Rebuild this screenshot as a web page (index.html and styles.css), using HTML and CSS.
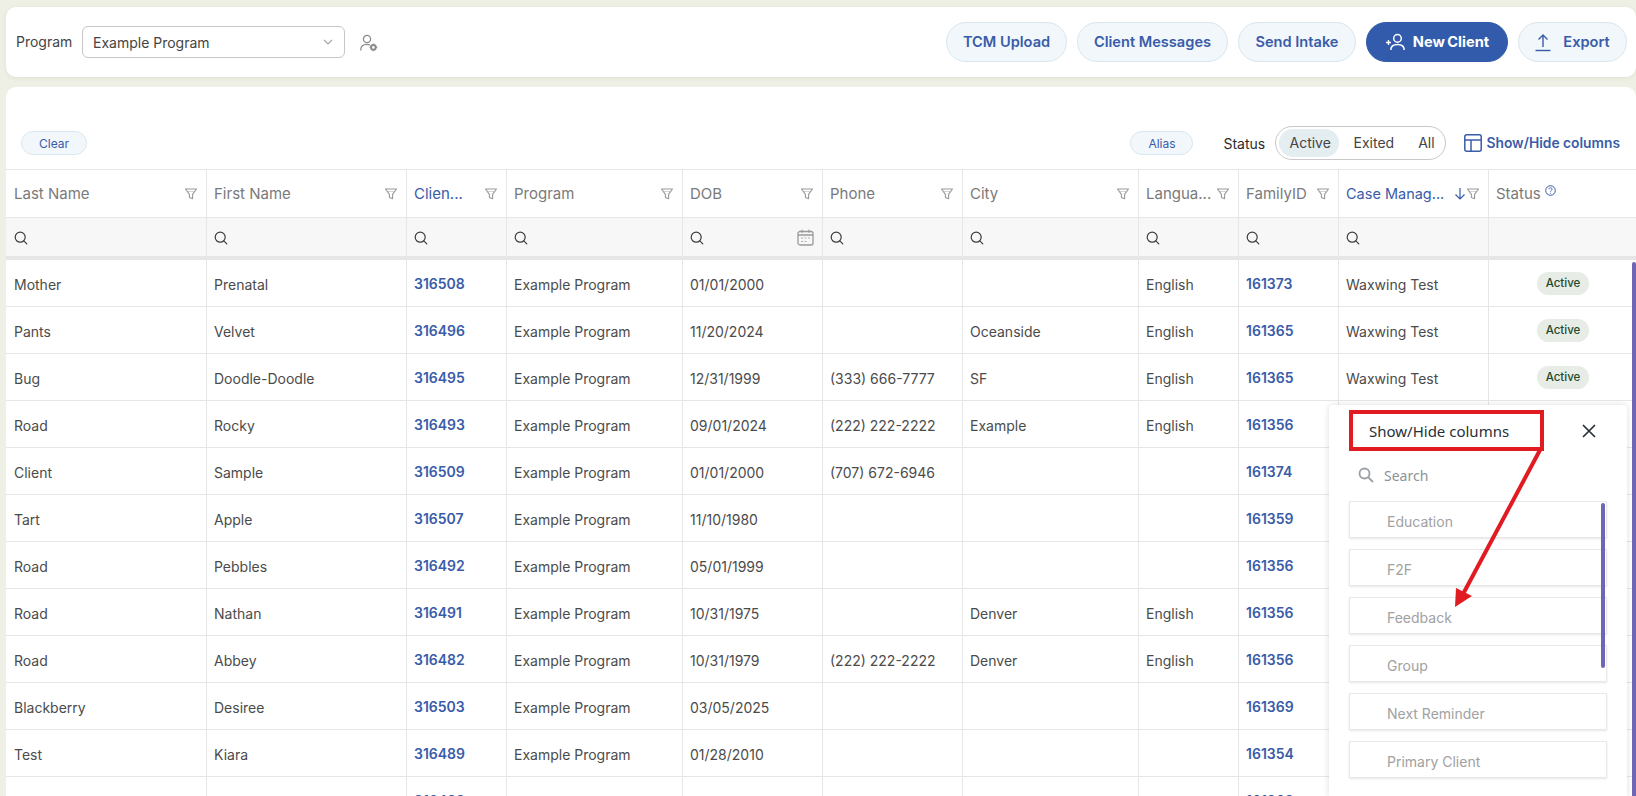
FILE: index.html
```html
<!DOCTYPE html>
<html lang="en">
<head>
<meta charset="utf-8">
<title>Clients</title>
<link rel="stylesheet" href="styles.css">
</head>
<body>
<svg class="defs" width="0" height="0" aria-hidden="true">
  <symbol id="i-filter" viewBox="0 0 14 14"><path d="M1.5 2h11L8.6 7.4v4.4L5.4 10.4v-3z" fill="none" stroke="currentColor" stroke-width="1.1" stroke-linejoin="round"/><path d="M3.4 4.4h7.2" stroke="currentColor" stroke-width=".8" opacity=".6"/></symbol>
  <symbol id="i-search" viewBox="0 0 14 14"><circle cx="6.2" cy="6.2" r="5" fill="none" stroke="currentColor" stroke-width="1.2"/><path d="M9.8 9.8l3 3" stroke="currentColor" stroke-width="1.2" stroke-linecap="round"/></symbol>
</svg>

<header class="topbar">
  <span class="label">Program</span>
  <div class="select">
    <span>Example Program</span>
    <svg class="chev" width="10" height="6" viewBox="0 0 10 6"><path d="M1 1l4 4 4-4" fill="none" stroke="#a5a5a5" stroke-width="1.1"/></svg>
  </div>
  <svg class="usergear" width="20" height="20" viewBox="0 0 20 20"><circle cx="8" cy="6" r="3.6" fill="none" stroke="#8c8c8c" stroke-width="1.3"/><path d="M1.8 17c0-3.6 2.6-5.6 6-5.6 1 0 1.8.1 2.6.5" fill="none" stroke="#8c8c8c" stroke-width="1.3" stroke-linecap="round"/><circle cx="14.4" cy="14.4" r="2.3" fill="none" stroke="#8c8c8c" stroke-width="2"/><path d="M14.4 10.6v1.4M14.4 16.8v1.4M10.6 14.4H12M16.8 14.4h1.4" stroke="#8c8c8c" stroke-width="1.2"/></svg>
  <div class="actions">
    <button class="btn w-tcm">TCM Upload</button>
    <button class="btn w-msg">Client Messages</button>
    <button class="btn w-intake">Send Intake</button>
    <button class="btn primary w-new">
      <svg width="22" height="20" viewBox="0 0 22 20"><circle cx="12.5" cy="6.4" r="3.8" fill="none" stroke="#fff" stroke-width="1.5"/><path d="M5.8 18c0-3.6 2.8-5.6 6.7-5.6s6.7 2 6.7 5.6" fill="none" stroke="#fff" stroke-width="1.5"/><path d="M1 10.5h5M3.5 8v5" stroke="#fff" stroke-width="1.4"/></svg>
      New Client
    </button>
    <button class="btn w-export">
      <svg width="16" height="20" viewBox="0 0 16 20"><path d="M8 15V3M3.5 7.5L8 3l4.5 4.5" fill="none" stroke="#3a5ca8" stroke-width="1.4"/><path d="M0.5 18.5h15" stroke="#3a5ca8" stroke-width="1.4"/></svg>
      Export
    </button>
  </div>
</header>

<main class="card">
  <div class="toolbar">
    <button class="chip chip-clear">Clear</button>
    <div class="tools">
      <button class="chip chip-alias">Alias</button>
      <span class="status-label">Status</span>
      <div class="toggle">
        <span class="opt on">Active</span>
        <span class="opt">Exited</span>
        <span class="opt">All</span>
      </div>
      <a class="columns-link">
        <svg width="18" height="18" viewBox="0 0 18 18"><rect x=".8" y=".8" width="16.4" height="16.4" rx="2" fill="none" stroke="#3a5ca8" stroke-width="1.5"/><path d="M.8 6h16.4M7 6v11" stroke="#3a5ca8" stroke-width="1.5"/></svg>
        Show/Hide columns
      </a>
    </div>
  </div>

  <table class="grid">
    <colgroup>
      <col class="c201"><col class="c200"><col class="c100"><col class="c176"><col class="c140"><col class="c140"><col class="c176"><col class="c100"><col class="c100"><col class="c150"><col>
    </colgroup>
    <thead>
      <tr class="head">
        <th><div class="th"><span>Last Name</span><svg class="filter"><use href="#i-filter"/></svg></div></th>
        <th><div class="th"><span>First Name</span><svg class="filter"><use href="#i-filter"/></svg></div></th>
        <th><div class="th"><span class="sorted">Clien...</span><svg class="filter"><use href="#i-filter"/></svg></div></th>
        <th><div class="th"><span>Program</span><svg class="filter"><use href="#i-filter"/></svg></div></th>
        <th><div class="th"><span>DOB</span><svg class="filter"><use href="#i-filter"/></svg></div></th>
        <th><div class="th"><span>Phone</span><svg class="filter"><use href="#i-filter"/></svg></div></th>
        <th><div class="th"><span>City</span><svg class="filter"><use href="#i-filter"/></svg></div></th>
        <th><div class="th"><span>Langua...</span><svg class="filter"><use href="#i-filter"/></svg></div></th>
        <th><div class="th"><span>FamilyID</span><svg class="filter"><use href="#i-filter"/></svg></div></th>
        <th><div class="th"><span class="sorted tight">Case Manag...</span><span class="sort-end"><svg class="arrow" width="12" height="13" viewBox="0 0 12 13"><path d="M6 1v11M1.5 7.5L6 12l4.5-4.5" fill="none" stroke="#3a5ca8" stroke-width="1.2"/></svg><svg class="filter"><use href="#i-filter"/></svg></span></div></th>
        <th><div class="th th-start"><span>Status</span><svg class="help" width="11" height="11" viewBox="0 0 11 11"><circle cx="5.5" cy="5.5" r="4.8" fill="none" stroke="#3a5ca8"/><path d="M3.9 4.3c0-2 3.2-2 3.2-.1 0 1.200-1.600 1.200-1.600 2.500M5.500 7.800v.9" fill="none" stroke="#3a5ca8" stroke-width=".9"/></svg></div></th>
      </tr>
      <tr class="searchrow">
        <th><svg class="mag"><use href="#i-search"/></svg></th>
        <th><svg class="mag"><use href="#i-search"/></svg></th>
        <th><svg class="mag"><use href="#i-search"/></svg></th>
        <th><svg class="mag"><use href="#i-search"/></svg></th>
        <th><div class="th"><svg class="mag"><use href="#i-search"/></svg><svg class="cal" width="17" height="17" viewBox="0 0 17 17"><rect x="1" y="2.500" width="15" height="13.500" rx="2" fill="none" stroke="#9a9a9a" stroke-width="1.300"/><path d="M1 6h15" stroke="#9a9a9a" stroke-width="1.300"/><path d="M5 .8v3M12 .8v3" stroke="#9a9a9a" stroke-width="1.300"/><path d="M4 9h2M7.500 9h2M11 9h2M4 12.500h2M7.500 12.500h2" stroke="#b0b0b0" stroke-width="1.200"/></svg></div></th>
        <th><svg class="mag"><use href="#i-search"/></svg></th>
        <th><svg class="mag"><use href="#i-search"/></svg></th>
        <th><svg class="mag"><use href="#i-search"/></svg></th>
        <th><svg class="mag"><use href="#i-search"/></svg></th>
        <th><svg class="mag"><use href="#i-search"/></svg></th>
        <th></th>
      </tr>
    </thead>
    <tbody>
      <tr><td>Mother</td><td>Prenatal</td><td class="id">316508</td><td>Example Program</td><td>01/01/2000</td><td></td><td></td><td>English</td><td class="id">161373</td><td>Waxwing Test</td><td class="st"><span class="badge">Active</span></td></tr>
      <tr><td>Pants</td><td>Velvet</td><td class="id">316496</td><td>Example Program</td><td>11/20/2024</td><td></td><td>Oceanside</td><td>English</td><td class="id">161365</td><td>Waxwing Test</td><td class="st"><span class="badge">Active</span></td></tr>
      <tr><td>Bug</td><td>Doodle-Doodle</td><td class="id">316495</td><td>Example Program</td><td>12/31/1999</td><td>(333) 666-7777</td><td>SF</td><td>English</td><td class="id">161365</td><td>Waxwing Test</td><td class="st"><span class="badge">Active</span></td></tr>
      <tr><td>Road</td><td>Rocky</td><td class="id">316493</td><td>Example Program</td><td>09/01/2024</td><td>(222) 222-2222</td><td>Example</td><td>English</td><td class="id">161356</td><td></td><td></td></tr>
      <tr><td>Client</td><td>Sample</td><td class="id">316509</td><td>Example Program</td><td>01/01/2000</td><td>(707) 672-6946</td><td></td><td></td><td class="id">161374</td><td></td><td></td></tr>
      <tr><td>Tart</td><td>Apple</td><td class="id">316507</td><td>Example Program</td><td>11/10/1980</td><td></td><td></td><td></td><td class="id">161359</td><td></td><td></td></tr>
      <tr><td>Road</td><td>Pebbles</td><td class="id">316492</td><td>Example Program</td><td>05/01/1999</td><td></td><td></td><td></td><td class="id">161356</td><td></td><td></td></tr>
      <tr><td>Road</td><td>Nathan</td><td class="id">316491</td><td>Example Program</td><td>10/31/1975</td><td></td><td>Denver</td><td>English</td><td class="id">161356</td><td></td><td></td></tr>
      <tr><td>Road</td><td>Abbey</td><td class="id">316482</td><td>Example Program</td><td>10/31/1979</td><td>(222) 222-2222</td><td>Denver</td><td>English</td><td class="id">161356</td><td></td><td></td></tr>
      <tr><td>Blackberry</td><td>Desiree</td><td class="id">316503</td><td>Example Program</td><td>03/05/2025</td><td></td><td></td><td></td><td class="id">161369</td><td></td><td></td></tr>
      <tr><td>Test</td><td>Kiara</td><td class="id">316489</td><td>Example Program</td><td>01/28/2010</td><td></td><td></td><td></td><td class="id">161354</td><td></td><td></td></tr>
      <tr><td>Test</td><td>Kid</td><td class="id">316488</td><td>Example Program</td><td>01/01/2015</td><td></td><td></td><td>English</td><td class="id">161368</td><td></td><td></td></tr>
    </tbody>
  </table>
</main>

<div class="vbar"></div>

<aside class="panel">
  <div class="panel-head">
    <span class="panel-title">Show/Hide columns</span>
    <svg class="close" width="14" height="14" viewBox="0 0 14 14"><path d="M1 1l12 12M13 1L1 13" stroke="#27303a" stroke-width="1.700"/></svg>
  </div>
  <div class="panel-search">
    <svg width="16" height="16" viewBox="0 0 16 16"><circle cx="6.500" cy="6.500" r="5" fill="none" stroke="#9aa0a6" stroke-width="1.800"/><path d="M10.300 10.300l4.700 4.700" stroke="#9aa0a6" stroke-width="1.800"/></svg>
    <span>Search</span>
  </div>
  <div class="panel-list">
    <div class="item">Education</div>
    <div class="item">F2F</div>
    <div class="item">Feedback</div>
    <div class="item">Group</div>
    <div class="item">Next Reminder</div>
    <div class="item">Primary Client</div>
    <div class="thumb"></div>
  </div>
</aside>

<svg class="annot" width="1636" height="796" viewBox="0 0 1636 796" aria-hidden="true">
  <rect x="1351" y="412" width="191" height="37" fill="none" stroke="#e01b22" stroke-width="4"/>
  <path d="M1540 450L1462 596" stroke="#e01b22" stroke-width="4"/>
  <polygon points="1456,588 1472,596 1455,607" fill="#e01b22"/>
</svg>
</body>
</html>
```

FILE: styles.css
```css
* { box-sizing: border-box; }
html, body { margin: 0; height: 796px; overflow: hidden; }
body {
  position: relative;
  padding: 7px 0 0 6px;
  background: #eef0e5;
  font-family: Inter, "Liberation Sans", sans-serif;
  font-size: 14px;
  color: #4b4b4b;
}
.defs { position: absolute; }

.topbar {
  display: flex;
  align-items: center;
  height: 70px;
  padding: 0 9px 0 10px;
  background: #fff;
  border-radius: 10px;
  box-shadow: 0 1px 4px rgba(120, 120, 90, .12);
}
.label { color: #444; width: 66px; margin-bottom: 2px; }
.select {
  display: flex;
  align-items: center;
  justify-content: space-between;
  width: 263px;
  height: 32px;
  padding: 0 11px 0 10px;
  border: 1px solid #c6c6c6;
  border-radius: 6px;
  color: #444;
}
.usergear { margin-left: 14px; margin-top: 2px; }
.actions { display: flex; gap: 10px; margin-left: auto; }
.btn {
  display: flex;
  align-items: center;
  justify-content: center;
  gap: 8px;
  height: 40px;
  padding: 0;
  border: 1px solid #d9e6ed;
  border-radius: 20px;
  background: #f1f7fb;
  color: #3a5ca8;
  font: 600 14.6px Inter, "Liberation Sans", sans-serif;
}
.btn.primary { background: #325cab; border-color: #325cab; color: #fff; font-weight: 700; gap: 6px; word-spacing: -1px; }
.w-tcm { width: 121px; }
.w-msg { width: 151px; }
.w-intake { width: 118px; }
.w-new { width: 142px; }
.w-export { width: 109px; gap: 12px; }

.card {
  height: 709px;
  margin-top: 10px;
  background: #fff;
  border-radius: 10px 10px 0 0;
  overflow: hidden;
}
.toolbar {
  display: flex;
  align-items: center;
  height: 82px;
  padding: 39px 16px 9px 15px;
}
.chip {
  height: 24px;
  padding: 0;
  border: 1px solid #dbe7ee;
  border-radius: 12px;
  background: #f1f7fb;
  color: #3a5ca8;
  font: 400 12px Inter, "Liberation Sans", sans-serif;
}
.chip-clear { width: 66px; }
.chip-alias { width: 63px; margin-right: 30px; }
.tools { display: flex; align-items: center; margin-left: auto; }
.status-label { width: 52px; color: #2b2b2b; }
.toggle {
  display: flex;
  align-items: center;
  width: 171px;
  height: 34px;
  padding: 0 3px;
  border: 1px solid #c9c9c9;
  border-radius: 17px;
  color: #444;
}
.opt { padding: 0 10px; line-height: 28px; border-radius: 14px; }
.opt.on { width: 60px; background: #e4eef1; margin-right: 4px; }
.opt:last-child { margin-left: 4px; }
.columns-link {
  display: flex;
  align-items: center;
  gap: 4px;
  margin-left: 18px;
  color: #3a5ca8;
  font-weight: 600;
  font-size: 13.8px;
  white-space: nowrap;
}

.grid {
  width: 100%;
  table-layout: fixed;
  border-collapse: separate;
  border-spacing: 0;
}
.c201 { width: 201px; }
.c200 { width: 200px; }
.c100 { width: 100px; }
.c176 { width: 176px; }
.c140 { width: 140px; }
.c150 { width: 150px; }
.grid th, .grid td {
  padding: 0 8px 0 7px;
  border-right: 1px solid #e6e6e6;
  border-bottom: 1px solid #e6e6e6;
  text-align: left;
  font-weight: 400;
  white-space: nowrap;
  overflow: hidden;
}
.grid th:first-child, .grid td:first-child { padding-left: 8px; }
.grid th:last-child, .grid td:last-child { border-right: 0; }
.head th {
  height: 49px;
  border-top: 1px solid #e6e6e6;
  color: #7a7a7a;
  font-size: 15px;
}
.searchrow th {
  height: 42px;
  background: #f7f7f7;
  border-bottom: 4px solid #e6e6e6;
  color: #3c3c3c;
}
.grid td { height: 47px; padding-top: 2px; color: #4b4b4b; }
.th { display: flex; align-items: center; justify-content: space-between; }
.th-start { justify-content: flex-start; gap: 4px; }
.sorted { color: #3a5ca8; }
.tight { font-size: 14.5px; }
.sort-end { display: flex; align-items: center; }
.filter { width: 14px; height: 14px; color: #9a9a9a; flex: none; }
.help { margin-bottom: 6px; }
.mag { display: block; width: 14px; height: 14px; color: #3c3c3c; margin-top: 1px; }
.grid td.id { color: #3a5ca8; font-weight: 600; padding-bottom: 2px; }
.grid td.st { padding-left: 48px; padding-bottom: 2px; }
.badge {
  display: inline-block;
  width: 52px;
  line-height: 23px;
  border-radius: 12px;
  background: #e7ece6;
  color: #1f4a2c;
  font-size: 11.5px;
  font-weight: 500;
  text-align: center;
}

.vbar {
  position: absolute;
  left: 1632px;
  top: 262px;
  width: 4px;
  height: 534px;
  background: #6f67b5;
  border-radius: 2px 2px 0 0;
}

.panel {
  position: absolute;
  left: 1329px;
  top: 405px;
  width: 298px;
  height: 391px;
  padding: 0 20px;
  background: #fff;
  border-radius: 4px 4px 0 0;
  box-shadow: 0 0 6px rgba(0, 0, 0, .14);
}
.panel-head {
  display: flex;
  align-items: center;
  justify-content: space-between;
  height: 50px;
  padding: 1px 0 0 20px;
}
.panel-title {
  font-family: "Noto Sans", "Liberation Sans", sans-serif;
  font-size: 15px;
  color: #27303a;
}
.close { margin-right: 11px; }
.panel-search {
  display: flex;
  align-items: center;
  gap: 10px;
  height: 38px;
  margin-bottom: 8px;
  padding: 2px 0 0 9px;
  font-family: "Noto Sans", "Liberation Sans", sans-serif;
  color: #8d9297;
}
.panel-list {
  position: relative;
  display: flex;
  flex-direction: column;
  gap: 11px;
}
.item {
  height: 37px;
  line-height: 40px;
  padding-left: 37px;
  background: #fff;
  border: 1px solid #e8e8e8;
  box-shadow: 0 1px 2px rgba(0, 0, 0, .1);
  color: #a1a1a1;
}
.thumb {
  position: absolute;
  top: 2px;
  right: 2px;
  width: 4px;
  height: 165px;
  border-radius: 2px;
  background: #6f67b5;
}
.annot { position: absolute; left: 0; top: 0; pointer-events: none; }
```
